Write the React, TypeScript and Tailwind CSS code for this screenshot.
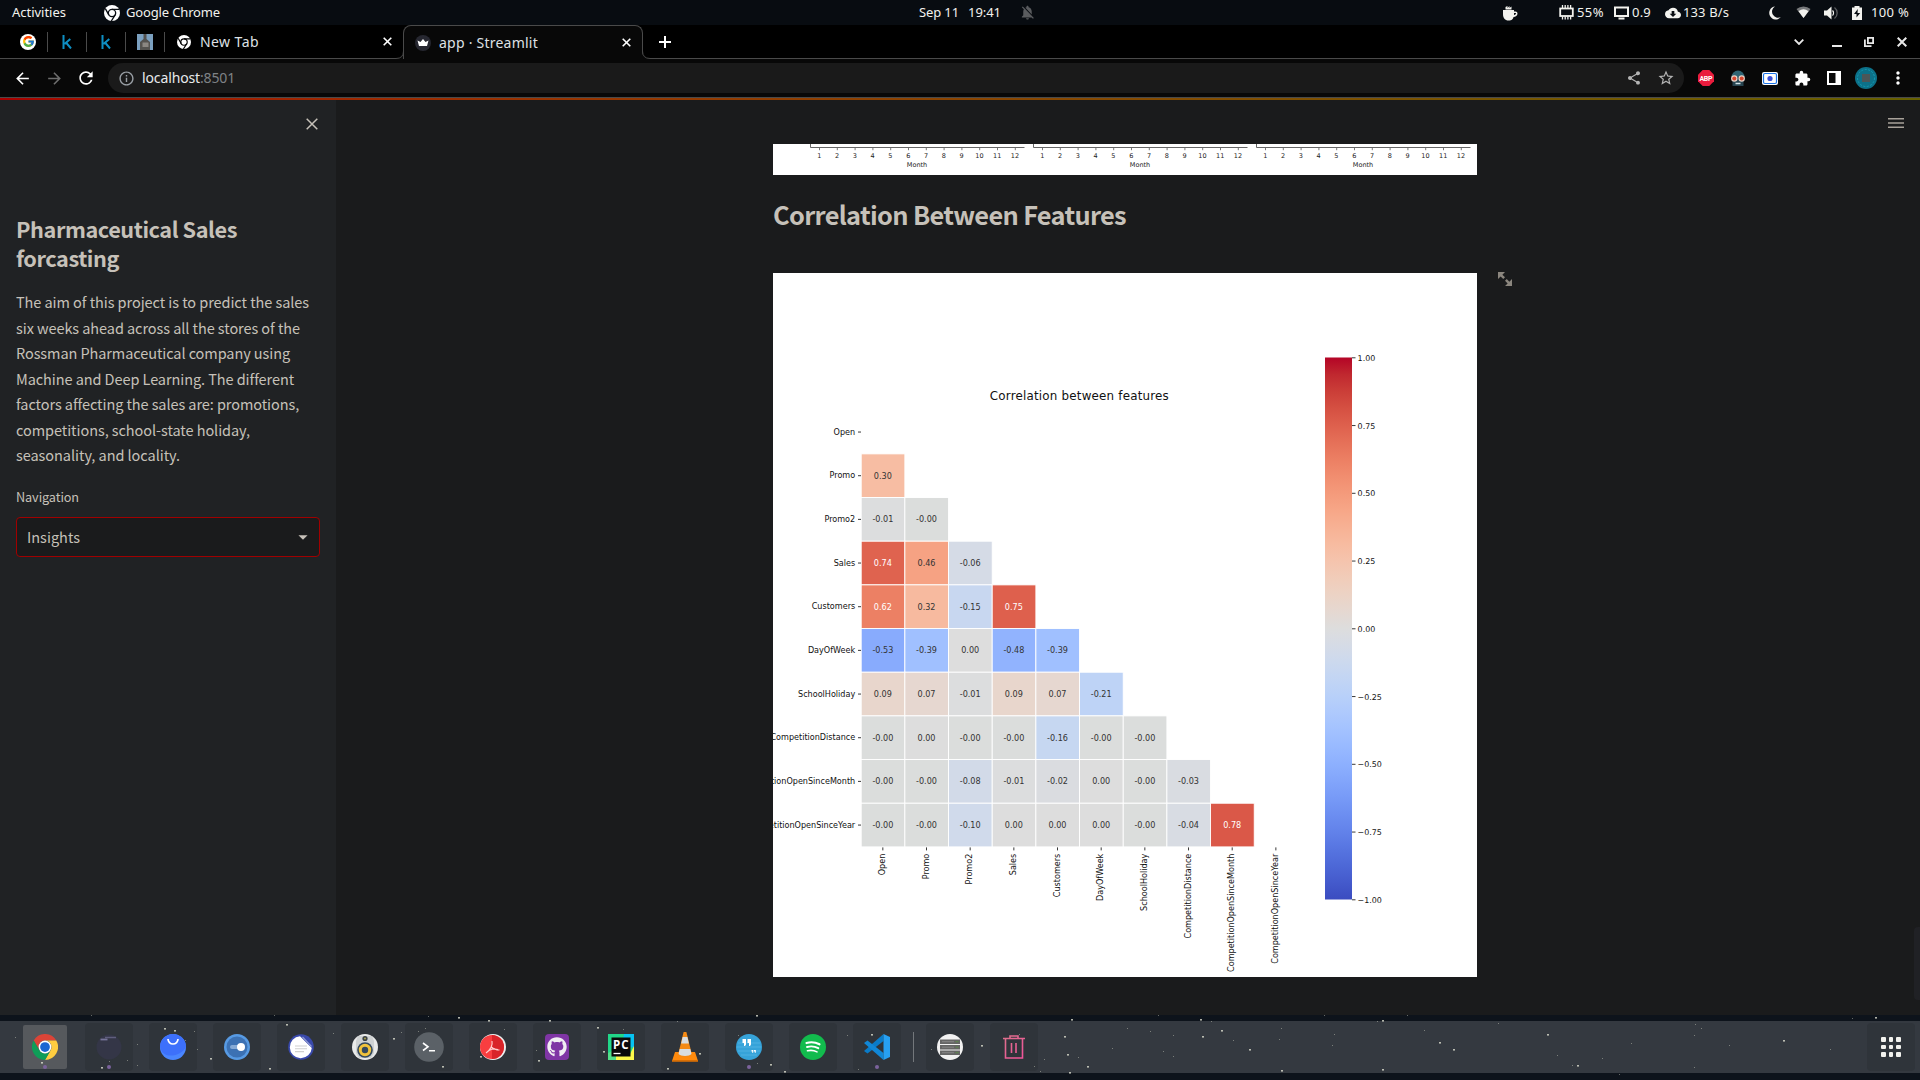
import React, { useLayoutEffect, useRef } from "react";
import {
  MdArrowBack,
  MdArrowForward,
  MdRefresh,
  MdInfoOutline,
  MdShare,
  MdStarBorder,
  MdExtension,
  MdNotificationsOff,
  MdCloudDownload,
  MdArrowDropDown,
  MdMoreVert,
} from "react-icons/md";
import { FcGoogle } from "react-icons/fc";
import { FaGithub, FaSpotify } from "react-icons/fa";

/* One line of text, spaced so that it fills the given width. */
function Line({ w, className = "", children }: { w: number; className?: string; children: string }) {
  const ref = useRef<HTMLSpanElement>(null);
  useLayoutEffect(() => {
    const el = ref.current;
    if (!el) return;
    el.style.letterSpacing = "0px";
    const natural = el.getBoundingClientRect().width;
    el.style.letterSpacing = `${(w - natural) / children.length}px`;
  }, [w, children]);
  return (
    <div className={"shrink-0 whitespace-pre " + className} style={{ width: w }}>
      <span ref={ref}>{children}</span>
    </div>
  );
}

function ChromeMono({ size, bg }: { size: number; bg: string }) {
  return (
    <svg width={size} height={size} viewBox="0 0 48 48">
      <circle cx="24" cy="24" r="24" fill="#fff" />
      <g stroke={bg} strokeWidth="4" fill="none">
        <path d="M24 13H46M14.5 29.5L4 11M33.5 29.5L22 48" />
        <circle cx="24" cy="24" r="11" />
      </g>
    </svg>
  );
}

function Cross({ size = 9, color = "#fff", width = 1.6 }: { size?: number; color?: string; width?: number }) {
  return (
    <svg width={size} height={size} viewBox={`0 0 ${size} ${size}`} stroke={color} strokeWidth={width}>
      <path d={`M.7 .7L${size - 0.7} ${size - 0.7}M${size - 0.7} .7L.7 ${size - 0.7}`} />
    </svg>
  );
}

function SystemBar() {
  return (
    <div className="flex h-[25px] items-center bg-[#080c11] text-[13px] text-[#f2f2ee]">
      <Line w={54} className="ml-3">Activities</Line>
      <div className="ml-[38px]"><ChromeMono size={16} bg="#080c11" /></div>
      <Line w={94} className="ml-[6px]">Google Chrome</Line>
      <Line w={40} className="ml-[699px]">Sep 11</Line>
      <Line w={33} className="ml-[9px]">19:41</Line>
      <MdNotificationsOff className="ml-[18px] text-[#5a5c5f]" size={17} />
      <svg className="ml-[466px] shrink-0" width="16" height="16" viewBox="0 0 16 16" fill="#f2f2ee">
        <path d="M1 5h11v1.500h1.500a2 2 0 0 1 2 2c0 2-2 3.500-4 3.500-.5 2-1.500 3.500-5 3.500S1 13 1 9z" />
        <path d="M3.500 4.500V2l2-1v2l2-2v2l2-1.500v3z" />
        <path d="M12 8h2c0 1-.8 2-2 2z" fill="#080c11" />
      </svg>
      <svg className="ml-[41px] shrink-0" width="15" height="15" viewBox="0 0 15 15" fill="none" stroke="#f2f2ee">
        <rect x="1.200" y="3.500" width="12.600" height="7.500" strokeWidth="1.800" />
        <path d="M3.500 0v3M6.200 0v3M8.900 0v3M11.600 0v3M3.500 11.500v3M6.200 11.500v3M8.900 11.500v3M11.600 11.500v3" strokeWidth="1.300" />
      </svg>
      <Line w={27} className="ml-[3px]">55%</Line>
      <svg className="ml-[10px] shrink-0" width="15" height="14" viewBox="0 0 15 14" fill="none" stroke="#f2f2ee" strokeWidth="2">
        <path d="M1 1.500h13v8.500H1zM4.500 12.500h6" />
      </svg>
      <Line w={19} className="ml-[3px]">0.9</Line>
      <MdCloudDownload className="ml-[14px] shrink-0" size={16} />
      <Line w={46} className="ml-[2px]">133 B/s</Line>
      <svg className="ml-[40px] shrink-0" width="12" height="14" viewBox="0 0 12 14" fill="#f2f2ee">
        <path d="M6 .5A6.500 6.500 0 1 0 11.800 11 6 6 0 0 1 6 .5z" />
      </svg>
      <svg className="ml-[15px] shrink-0" width="15" height="13" viewBox="0 0 15 13">
        <path d="M.5 3a11 11 0 0 1 14 0L7.500 12z" fill="#77797b" />
        <path d="M2.500 5.300a8 8 0 0 1 10 0L7.500 12z" fill="#f2f2ee" />
      </svg>
      <svg className="ml-[13px] shrink-0" width="14" height="14" viewBox="0 0 14 14">
        <path d="M0 4.500h3L7.500.5v13L3 9.500H0z" fill="#f2f2ee" />
        <path d="M8.500 4.500a3.500 3.500 0 0 1 0 5" stroke="#f2f2ee" strokeWidth="1.200" fill="none" />
        <path d="M10.500 1.500a7 7 0 0 1 0 11" stroke="#5a5c5f" strokeWidth="1.300" fill="none" />
      </svg>
      <svg className="ml-[14px] shrink-0" width="10" height="14" viewBox="0 0 10 14">
        <path d="M2.500 0h5v1.500H10V14H0V1.500h2.500z" fill="#f2f2ee" />
        <path d="M5.800 3L2 8h2.500v3.500L8.200 7H5.500z" fill="#080c11" />
      </svg>
      <Line w={38} className="ml-[9px]">100 %</Line>
    </div>
  );
}

function PinnedTab({ children }: { children: React.ReactNode }) {
  return (
    <div className="flex items-center">
      <div className="flex w-[38px] items-center justify-center">{children}</div>
      <div className="h-5 w-px bg-[#4a4a4a]" />
    </div>
  );
}

function KLetter() {
  return (
    <svg width="10" height="14" viewBox="0 0 10 14" stroke="#0e8fc4" strokeWidth="2" fill="none">
      <path d="M1.500 0v14M8.300 4L2.500 9M4 7.500L9 13.500" />
    </svg>
  );
}

function TabStrip() {
  return (
    <div className="flex h-[34px] bg-black text-[14px] text-[#dfe1e5]">
      <div className="flex w-[396px] items-center border-b border-[#4a4a4a] pl-[9px]">
        <PinnedTab>
          <div className="flex size-4 items-center justify-center rounded-full bg-white"><FcGoogle size={13} /></div>
        </PinnedTab>
        <PinnedTab><KLetter /></PinnedTab>
        <PinnedTab><KLetter /></PinnedTab>
        <PinnedTab>
          <svg width="16" height="16" viewBox="0 0 16 16">
            <rect width="16" height="16" fill="#7ba0c0" />
            <path d="M6.500 0h3v5l3.500 3v8H3V8l3.500-3z" fill="#54524f" />
            <path d="M5.500 8.500h6v4.500h-6z" fill="#8b8782" />
          </svg>
        </PinnedTab>
        <div className="ml-3 shrink-0"><ChromeMono size={14} bg="#000" /></div>
        <Line w={59} className="ml-[9px]">New Tab</Line>
        <div className="ml-[124px] shrink-0"><Cross /></div>
      </div>
      <svg width="8" height="34" viewBox="0 0 8 34">
        <path d="M0 33.500Q8 33.500 8 26V34H0z" fill="#080808" />
        <path d="M0 33.500Q7.500 33.500 7.500 26" stroke="#4a4a4a" fill="none" />
      </svg>
      <div className="-mx-px flex w-[240px] items-center rounded-t-lg border-x border-t border-[#4a4a4a] bg-[#080808]">
        <svg className="ml-[11px]" width="16" height="16" viewBox="0 0 16 16">
          <circle cx="8" cy="8" r="8" fill="#262730" />
          <path d="M2.500 5.500L5.500 7 8 4l2.500 3 3-1.500L12 11H4z" fill="#fff" />
        </svg>
        <Line w={99} className="ml-[8px]">app · Streamlit</Line>
        <div className="ml-[84px]"><Cross /></div>
      </div>
      <svg width="8" height="34" viewBox="0 0 8 34">
        <path d="M8 33.500Q0 33.500 0 26V34H8z" fill="#080808" />
        <path d="M8 33.500Q.5 33.500 .5 26" stroke="#4a4a4a" fill="none" />
      </svg>
      <div className="flex flex-1 items-center border-b border-[#4a4a4a]">
        <svg className="ml-[9px]" width="12" height="12" viewBox="0 0 12 12" stroke="#fff" strokeWidth="2">
          <path d="M6 0v12M0 6h12" />
        </svg>
        <svg className="ml-auto" width="10" height="6" viewBox="0 0 10 6" stroke="#e8e8e8" strokeWidth="1.800" fill="none">
          <path d="M.7 .7L5 5 9.300 .7" />
        </svg>
        <div className="mt-[8px] ml-[28px] h-[2px] w-[10px] bg-[#e8e8e8]" />
        <svg className="ml-[22px]" width="10" height="10" viewBox="0 0 10 10" stroke="#e8e8e8" strokeWidth="1.800" fill="none">
          <path d="M3.900 .9h5.200v5.200H3.900zM.9 2.500V9.100H7.500" />
        </svg>
        <div className="mr-[13px] ml-[23px]"><Cross size={10} color="#e8e8e8" width={2} /></div>
      </div>
    </div>
  );
}

function Slot({ children }: { children: React.ReactNode }) {
  return <div className="flex w-8 shrink-0 items-center justify-center">{children}</div>;
}

function Toolbar() {
  return (
    <div className="flex h-[38px] items-center bg-[#080808] pl-[6px] text-white">
      <Slot><MdArrowBack size={19} /></Slot>
      <Slot><MdArrowForward size={19} className="text-[#6d6d6d]" /></Slot>
      <Slot><MdRefresh size={20} /></Slot>
      <div className="ml-[6px] flex h-[30px] w-[1576px] items-center rounded-full bg-[#1a1a1a] pr-[2px] pl-[10px] text-[14px]">
        <MdInfoOutline size={17} className="text-[#9aa0a6]" />
        <Line w={58} className="mb-[2px] ml-[7px] text-[#e8eaed]">localhost</Line>
        <Line w={35} className="mb-[2px] text-[#7f8286]">:8501</Line>
        <div className="ml-auto flex">
          <Slot><MdShare size={16} className="text-[#b4b4b4]" /></Slot>
          <Slot><MdStarBorder size={18} className="text-[#b4b4b4]" /></Slot>
        </div>
      </div>
      <div className="ml-[6px] flex items-center">
        <Slot>
          <svg width="16" height="16" viewBox="0 0 16 16">
            <path d="M4.700 0h6.600L16 4.700v6.600L11.300 16H4.700L0 11.300V4.700z" fill="#ea1c3d" />
            <text x="8" y="10.600" textAnchor="middle" fontSize="7" fontWeight="700" fontFamily="Roboto, sans-serif" fill="#fff" textLength="13">ABP</text>
          </svg>
        </Slot>
        <Slot>
          <svg width="16" height="16" viewBox="0 0 16 16">
            <path d="M1.500 7a6.500 6.500 0 0 1 13 0z" fill="#2f6473" />
            <rect x="2.500" y="7" width="11" height="9" fill="#274450" />
            <circle cx="4.300" cy="8.500" r="3.200" fill="#e8d2c6" />
            <circle cx="11.700" cy="8.500" r="3.200" fill="#e8d2c6" />
            <circle cx="4.300" cy="8.500" r="2" fill="#d8472f" />
            <circle cx="11.700" cy="8.500" r="2" fill="#d8472f" />
            <path d="M5.500 13.500h5" stroke="#cfe0e4" strokeWidth="1.500" />
          </svg>
        </Slot>
        <Slot>
          <svg width="16" height="13" viewBox="0 0 16 13">
            <rect width="16" height="13" rx="2" fill="#fff" />
            <rect x="1.500" y="1.500" width="13" height="10" rx="1.500" fill="none" stroke="#1a73e8" strokeWidth="1.200" />
            <circle cx="8" cy="6.500" r="2.600" fill="#3b50d8" />
          </svg>
        </Slot>
        <Slot><MdExtension size={17} /></Slot>
        <Slot>
          <svg width="14" height="14" viewBox="0 0 14 14">
            <path fill="#fff" fillRule="evenodd" d="M0 0h14v14H0zM2 2v10h6.500V2z" />
          </svg>
        </Slot>
        <Slot>
          <svg width="22" height="22" viewBox="0 0 22 22">
            <circle cx="11" cy="11" r="11" fill="#0d7189" />
            <circle cx="11" cy="11" r="8.500" fill="none" stroke="#119ab4" strokeWidth="1" strokeDasharray="2 1.500" />
            <rect x="7" y="7" width="8" height="8" fill="#4c5658" />
          </svg>
        </Slot>
        <Slot><MdMoreVert size={20} /></Slot>
      </div>
    </div>
  );
}

const INTRO: [string, number][] = [
  ["The aim of this project is to predict the sales", 293],
  ["six weeks ahead across all the stores of the", 284],
  ["Rossman Pharmaceutical company using", 274],
  ["Machine and Deep Learning. The different", 278],
  ["factors affecting the sales are: promotions,", 283],
  ["competitions, school-state holiday,", 234],
  ["seasonality, and locality.", 164],
];

function Sidebar() {
  return (
    <aside className="w-[336px] shrink-0 bg-[#202224] px-4 text-[#c6c1b9]">
      <div className="flex h-[48px] items-center justify-end pr-[2px]">
        <Cross size={12} color="#c6c1b9" width={1.5} />
      </div>
      <h1 className="mt-[66px] text-[21.700px] leading-[29px] font-bold">
        <Line w={221}>Pharmaceutical Sales</Line>
        <Line w={103}>forcasting</Line>
      </h1>
      <div className="mt-[17px] text-[14.500px] leading-[25.500px]">
        {INTRO.map(([text, w]) => (
          <Line key={text} w={w}>{text}</Line>
        ))}
      </div>
      <div className="mt-[19.700px] text-[12.700px] leading-[20px]">
        <Line w={63}>Navigation</Line>
      </div>
      <div className="mt-[10px] flex h-10 w-[304px] items-center justify-between rounded-[4px] border border-[#a00000] bg-[#1a1b1c] pr-[5px] pl-[10px] text-[14.500px]">
        <Line w={53}>Insights</Line>
        <MdArrowDropDown size={22} />
      </div>
    </aside>
  );
}

const MONTHS = [1, 2, 3, 4, 5, 6, 7, 8, 9, 10, 11, 12];

function MonthAxes() {
  return (
    <svg className="block bg-white" width="704" height="31" fontFamily="DejaVu Sans, sans-serif" fontSize="6.500">
      {[37.5, 260.5, 483.5].map((x0) => (
        <g key={x0}>
          <path d={`M${x0} 0V3.500H${x0 + 214}`} stroke="#555" strokeWidth="0.900" fill="none" />
          {MONTHS.map((m, i) => (
            <g key={m}>
              <path d={`M${x0 + 9 + i * 17.8} 4v2.200`} stroke="#555" strokeWidth="0.800" />
              <text x={x0 + 8.7 + i * 17.8} y="13.500" textAnchor="middle" fill="#222">{m}</text>
            </g>
          ))}
          <text x={x0 + 106.5} y="22.600" textAnchor="middle" fill="#222">Month</text>
        </g>
      ))}
    </svg>
  );
}

const COOLWARM = [
  [59, 76, 192], [68, 90, 204], [77, 104, 215], [87, 117, 225], [98, 130, 234], [108, 142, 241],
  [119, 154, 247], [130, 165, 251], [141, 176, 254], [152, 185, 255], [163, 194, 255], [174, 201, 253],
  [184, 208, 249], [194, 213, 244], [204, 217, 238], [213, 219, 230], [221, 221, 221], [229, 216, 209],
  [236, 211, 197], [241, 204, 185], [245, 196, 173], [247, 187, 160], [247, 177, 148], [247, 166, 135],
  [244, 154, 123], [241, 141, 111], [236, 127, 99], [229, 112, 88], [222, 96, 77], [213, 80, 66],
  [203, 62, 56], [192, 40, 47], [180, 4, 38],
];

function coolwarm(v: number) {
  const t = ((v + 1) / 2) * 32;
  const i = Math.min(31, Math.floor(t));
  const f = t - i;
  const c = COOLWARM[i].map((a, k) => Math.round(a + (COOLWARM[i + 1][k] - a) * f));
  return `rgb(${c.join(",")})`;
}

const FEATURES = [
  "Open", "Promo", "Promo2", "Sales", "Customers", "DayOfWeek", "SchoolHoliday",
  "CompetitionDistance", "CompetitionOpenSinceMonth", "CompetitionOpenSinceYear",
];

const VALUES = [
  [],
  ["0.30"],
  ["-0.01", "-0.00"],
  ["0.74", "0.46", "-0.06"],
  ["0.62", "0.32", "-0.15", "0.75"],
  ["-0.53", "-0.39", "0.00", "-0.48", "-0.39"],
  ["0.09", "0.07", "-0.01", "0.09", "0.07", "-0.21"],
  ["-0.00", "0.00", "-0.00", "-0.00", "-0.16", "-0.00", "-0.00"],
  ["-0.00", "-0.00", "-0.08", "-0.01", "-0.02", "0.00", "-0.00", "-0.03"],
  ["-0.00", "-0.00", "-0.10", "0.00", "0.00", "0.00", "-0.00", "-0.04", "0.78"],
];

const X0 = 88.2;
const Y0 = 137.2;
const STEP = 43.67;

function Heatmap() {
  return (
    <svg className="block bg-white" width="704" height="704" fontFamily="DejaVu Sans, sans-serif" fontSize="8.080" fill="#111">
      <defs>
        <linearGradient id="bar" x1="0" y1="1" x2="0" y2="0">
          {COOLWARM.map((c, i) => (
            <stop key={i} offset={i / 32} stopColor={`rgb(${c.join(",")})`} />
          ))}
        </linearGradient>
      </defs>
      <text x="306.300" y="127.400" textAnchor="middle" fontSize="11.900" textLength="179">Correlation between features</text>
      {VALUES.map((row, r) =>
        row.map((v, c) => {
          const light = ["0.74", "0.62", "0.75", "0.78"].includes(v);
          return (
            <g key={`${r}-${c}`}>
              <rect x={X0 + c * STEP} y={Y0 + r * STEP} width={STEP} height={STEP} fill={v === "-0.00" ? "#dbdddc" : coolwarm(Number(v))} stroke="#fff" strokeWidth="0.900" />
              <text x={X0 + (c + 0.5) * STEP - 0.2} y={Y0 + (r + 0.5) * STEP + 2.8} textAnchor="middle" fill={light ? "#fff" : "#333"}>{v}</text>
            </g>
          );
        }),
      )}
      {FEATURES.map((name, i) => (
        <g key={name}>
          <path d={`M${X0 - 3.2} ${Y0 + (i + 0.5) * STEP}h3`} stroke="#222" strokeWidth="0.900" />
          <text x={X0 - 6} y={Y0 + (i + 0.5) * STEP + 2.5} textAnchor="end">{name}</text>
          <path d={`M${X0 + (i + 0.5) * STEP - 0.2} ${Y0 + 10 * STEP + 0.5}v3`} stroke="#222" strokeWidth="0.900" />
          <text transform={`translate(${X0 + (i + 0.5) * STEP + 1.9} ${Y0 + 10 * STEP + 6.8}) rotate(-90)`} textAnchor="end">{name}</text>
        </g>
      ))}
      <rect x="552" y="84.500" width="27" height="542" fill="url(#bar)" />
      {["1.00", "0.75", "0.50", "0.25", "0.00", "−0.25", "−0.50", "−0.75", "−1.00"].map((t, i) => (
        <g key={t}>
          <path d={`M579 ${84.8 + i * 67.75}h3.500`} stroke="#222" strokeWidth="0.900" />
          <text x="584.600" y={87.9 + i * 67.75} fontSize="7.950">{t}</text>
        </g>
      ))}
    </svg>
  );
}

function Content() {
  return (
    <main className="flex flex-1 bg-[#1a1b1c] text-[#c6c1b9]">
      <div className="ml-[437px] w-[704px] pt-[44px]">
        <MonthAxes />
        <h2 className="mt-[19px] text-[25.400px] leading-[40px] font-bold">
          <Line w={353}>Correlation Between Features</Line>
        </h2>
        <div className="mt-[39px]"><Heatmap /></div>
      </div>
      <svg className="mt-[172px] ml-[21px]" width="14" height="14" viewBox="0 0 8 8" fill="#8b867e">
        <path d="M0 0v4l1.500-1.500 1.500 1.500 1-1-1.500-1.500 1.500-1.500h-4zm5 4l-1 1 1.500 1.500-1.500 1.500h4v-4l-1.500 1.500-1.500-1.500z" />
      </svg>
      <div className="ml-auto flex flex-col items-end">
        <svg className="mt-[18px] mr-4" width="16" height="11" viewBox="0 0 16 11" stroke="#a8a299" strokeWidth="1.400">
          <path d="M0 .7h16M0 5h16M0 9.300h16" />
        </svg>
        <div className="mt-auto mb-[15px] h-[73px] w-[6px] rounded-l bg-[#202125]" />
      </div>
    </main>
  );
}

function DockItem({ children, active, running }: { children: React.ReactNode; active?: boolean; running?: boolean }) {
  return (
    <div className="flex w-16 shrink-0 justify-center">
      <div className={"relative flex items-center justify-center " + (active ? "size-11 rounded-[2px] bg-[#56595d]" : "size-12 rounded bg-[#2f343a]")}>
        {children}
        {running && <div className={"absolute left-1/2 size-1 -translate-x-1/2 rounded-full bg-[#7b639c] " + (active ? "bottom-0" : "bottom-[2px]")} />}
      </div>
    </div>
  );
}

const STARS: [number, number, number][] = [
  [91, 0, 1], [274, 0, 1], [428, 1, 1], [458, 2, 2], [488, 5, 2], [15, 22, 1], [164, 13, 2], [174, 15, 2], [194, 16, 1],
  [185, 25, 1], [137, 29, 1], [197, 34, 1], [210, 43, 2], [127, 45, 1], [137, 50, 1], [101, 52, 2], [109, 46, 1], [41, 47, 2],
  [286, 9, 2], [333, 18, 1], [269, 53, 2], [393, 23, 2], [401, 17, 1], [418, 16, 1], [425, 13, 1], [442, 51, 2], [480, 41, 2],
  [549, 5, 2], [504, 14, 1], [597, 12, 2], [623, 14, 1], [536, 35, 1], [538, 45, 2], [603, 36, 2], [677, 6, 1], [667, 53, 2],
  [699, 38, 2], [756, 0, 2], [738, 20, 1], [757, 48, 1], [770, 49, 2], [784, 56, 2], [847, 20, 1], [871, 19, 2], [858, 54, 1],
  [931, 34, 1], [981, 30, 2], [1019, 19, 1], [1034, 51, 1], [1040, 56, 1], [1044, 44, 1], [1064, 21, 2], [1067, 39, 2],
  [1069, 57, 2], [1071, 4, 2], [1078, 42, 1], [1087, 51, 2], [1112, 33, 1], [1127, 13, 1], [1150, 16, 1], [1158, 0, 1],
  [1163, 36, 1], [1173, 20, 1], [1173, 41, 1], [1200, 4, 2], [1202, 21, 2], [1211, 6, 1], [1221, 15, 2], [1233, 25, 1],
  [1249, 34, 2], [1279, 24, 1], [1281, 13, 1], [1281, 55, 2], [1324, 0, 1], [1334, 19, 1], [1332, 30, 1], [1377, 6, 1],
  [1382, 5, 2], [1382, 54, 2], [1407, 0, 1], [1424, 15, 1], [1439, 27, 2], [1453, 34, 2], [1498, 8, 1], [1547, 19, 2],
  [1557, 40, 1], [1572, 50, 1], [1577, 50, 2], [1602, 43, 1], [1631, 28, 1], [1619, 59, 1], [1695, 9, 1], [1701, 13, 1],
  [1694, 20, 1], [1729, 30, 1], [1694, 52, 1], [1783, 25, 2], [1830, 34, 1], [1852, 3, 1], [1875, 2, 2],
];

function Dock() {
  return (
    <div className="relative h-[65px] bg-[#0d131b] pt-[6px]">
      <div className="flex h-[52px] items-center bg-[#343940] pl-[13px]">
        <DockItem active running>
          <svg width="26" height="26" viewBox="0 0 48 48">
            <path d="M24 12h20.800A24 24 0 0 0 3.200 12L13.600 30A12 12 0 0 1 24 12z" fill="#db4437" />
            <path d="M44.800 12A24 24 0 0 1 24 48L34.400 30A12 12 0 0 0 24 12z" fill="#ffcd40" />
            <path d="M24 48A24 24 0 0 1 3.200 12L13.600 30A12 12 0 0 0 34.400 30z" fill="#0f9d58" />
            <circle cx="24" cy="24" r="11.800" fill="#fff" />
            <circle cx="24" cy="24" r="9" fill="#1b66d2" />
          </svg>
        </DockItem>
        <DockItem running>
          <svg width="26" height="26" viewBox="0 0 26 26">
            <circle cx="13" cy="13" r="12.500" fill="#343647" />
            <path d="M9 3.500h11" stroke="#5f5e7d" strokeWidth="1.500" />
            <path d="M4.500 5.500h7" stroke="#77759a" strokeWidth="1.800" />
          </svg>
        </DockItem>
        <DockItem>
          <svg width="26" height="26" viewBox="0 0 26 26">
            <circle cx="13" cy="13" r="13" fill="#4a86ff" />
            <path d="M0 13a13 13 0 0 1 26 0c-4 8-18 12-24 5z" fill="#3d70fb" />
            <path d="M8 5a5 5 0 0 0 10 0" stroke="#fff" strokeWidth="1.700" fill="none" />
          </svg>
        </DockItem>
        <DockItem>
          <svg width="26" height="26" viewBox="0 0 26 26">
            <circle cx="13" cy="13" r="13" fill="#579ae3" />
            <circle cx="13" cy="13" r="10.500" fill="#3c71b3" />
            <rect x="6" y="11" width="12" height="4" rx="2" fill="#86aad6" />
            <circle cx="17" cy="13" r="4" fill="#fff" />
          </svg>
        </DockItem>
        <DockItem>
          <svg width="26" height="26" viewBox="0 0 26 26">
            <circle cx="13" cy="13" r="12.800" fill="#3949ab" />
            <path d="M12 2.200A11 11 0 1 0 23.800 14z" fill="#fff" />
            <path d="M14.500 3L23.500 12.500" stroke="#8f9ad4" strokeWidth="1.200" />
            <path d="M7 12h12M7 14.800h12M7 17.600h9" stroke="#d0d0d0" strokeWidth="1.100" />
          </svg>
        </DockItem>
        <DockItem>
          <svg width="26" height="26" viewBox="0 0 26 26">
            <circle cx="13" cy="13" r="13" fill="#e9eaea" />
            <path d="M6 2h14l2 5v12l-3 5H7l-3-5V7z" fill="#cfd2d3" />
            <circle cx="13" cy="4.500" r="2.600" fill="#3c4245" />
            <circle cx="13" cy="4.500" r="1.100" fill="#9e9a50" />
            <circle cx="13" cy="16" r="7.800" fill="#34495e" />
            <circle cx="13" cy="16" r="4.700" fill="none" stroke="#f0c23c" strokeWidth="3" />
          </svg>
        </DockItem>
        <DockItem>
          <svg width="30" height="30" viewBox="0 0 30 30" fill="none" stroke="#fff" strokeWidth="1.600">
            <circle cx="15" cy="15" r="14.800" fill="#5b6167" stroke="none" />
            <path d="M9 11l5 3.800L9 18.500M15 18.700h6" />
          </svg>
        </DockItem>
        <DockItem>
          <svg width="26" height="26" viewBox="0 0 26 26">
            <circle cx="13" cy="13" r="13" fill="#eee" />
            <circle cx="12" cy="13" r="12" fill="#f93e40" />
            <path d="M12 1a12 12 0 0 1 0 24z" fill="#d92429" />
            <path d="M12 7c1 5-2 9-6 12M11.500 13c3 3 6 3 8 3M9 16.500c3-1.500 6-1.800 9-1" stroke="#ffd0d0" strokeWidth="1.100" fill="none" />
          </svg>
        </DockItem>
        <DockItem>
          <div className="flex h-[26px] w-6 items-center justify-center rounded-[4px] bg-[#7f35a5]">
            <FaGithub size={20} className="text-[#f1eef3]" />
          </div>
        </DockItem>
        <DockItem>
          <svg width="26" height="26" viewBox="0 0 26 26">
            <rect width="26" height="26" fill="#21d789" />
            <path d="M16 0h10v14L14 10z" fill="#07c3f2" />
            <path d="M0 26L4 20h18l4-8v14z" fill="#fcf84a" />
            <path d="M0 19l8-4v11H0z" fill="#52e089" />
            <rect x="3.500" y="3.500" width="19" height="19" fill="#0a0a0a" />
            <text x="5" y="14.500" fontSize="11.500" fontWeight="700" fontFamily="Open Sans, sans-serif" fill="#fff" textLength="15.500">PC</text>
            <path d="M5.500 19.500h7" stroke="#fff" strokeWidth="1.300" />
          </svg>
        </DockItem>
        <DockItem>
          <svg width="26" height="30" viewBox="0 0 26 30">
            <path d="M3 20h20l3 9H0z" fill="#ff8a0c" />
            <path d="M11.600 0h2.800L20 23c-2 3-12 3-14 0z" fill="#f58a14" />
            <path d="M10.600 5h4.800l1.500 6.500h-7.800zM7.700 17h10.600l1.200 5c-2 2.500-11 2.500-13 0z" fill="#d9dde0" />
            <path d="M0 28h26v1.800H0z" fill="#d86f05" />
          </svg>
        </DockItem>
        <DockItem running>
          <svg width="26" height="26" viewBox="0 0 26 26">
            <circle cx="13" cy="13" r="13" fill="#36a3d9" />
            <path d="M2 9h22M1 13h24M2 17h22M5 21h16" stroke="#55b5e4" strokeWidth="0.800" />
            <path d="M6.500 5h3.500v5c0 1.500-.8 2-2 2V9H6.500zM11.500 5H15v5c0 1.500-.8 2-2 2V9h-1.500zM15.500 16h1.800v2c0 .8-.4 1-1 1v-1.500h-.8zM18 16h1.800v2c0 .8-.4 1-1 1v-1.500H18z" fill="#fff" />
          </svg>
        </DockItem>
        <DockItem>
          <svg width="26" height="26" viewBox="0 0 26 26">
            <circle cx="13" cy="13" r="13" fill="#12bb4d" />
            <g stroke="#fff" fill="none" strokeLinecap="round">
              <path d="M6.500 9c4-1.200 9-.8 13 1.300" strokeWidth="2.200" />
              <path d="M7 13c3.500-1 8-.6 11.300 1.200" strokeWidth="1.900" />
              <path d="M7.500 16.800c3-.8 6.500-.5 9.500 1.100" strokeWidth="1.600" />
            </g>
          </svg>
        </DockItem>
        <DockItem running>
          <svg width="26" height="26" viewBox="0 0 26 26">
            <path d="M19.500 0v7L3.500 19.500 0 17z" fill="#0a7bc8" />
            <path d="M19.500 26v-7L3.500 6.500 0 9z" fill="#1187d6" />
            <path d="M19.500 0L26 3v20l-6.500 3z" fill="#27a0f2" />
          </svg>
        </DockItem>
        <div className="mr-1 ml-1 h-[30px] w-px bg-[#73777b]" />
        <DockItem>
          <svg width="26" height="26" viewBox="0 0 26 26">
            <circle cx="13" cy="13" r="13" fill="#f2f2f2" />
            <path d="M3 5.500h20v4.500H3zM3 11h20v4.500H3zM3 16.500h20v4.500H3z" fill="#666" />
            <path d="M5 7.700h12M5 13.200h12M5 18.700h12" stroke="#858585" />
            <path d="M18.500 7.700h3M18.500 13.200h3M18.500 18.700h3" stroke="#5c8a4a" />
          </svg>
        </DockItem>
        <DockItem>
          <svg width="24" height="26" viewBox="0 0 24 26" fill="none" stroke="url(#bin)" strokeWidth="1.600">
            <defs>
              <linearGradient id="bin" gradientUnits="userSpaceOnUse" x1="0" y1="0" x2="24" y2="26">
                <stop offset="0" stopColor="#d9738a" />
                <stop offset="1" stopColor="#f4509c" />
              </linearGradient>
            </defs>
            <path d="M1 4.500h22M8 4V2h8v2M3.500 5v19h17V5M9.500 9v10M14 9v10" />
          </svg>
        </DockItem>
        <div className="mr-[5px] ml-auto flex size-12 items-center justify-center rounded bg-[#2f343a]">
          <div className="grid grid-cols-3 gap-[3px]">
            {MONTHS.slice(0, 9).map((n) => (
              <div key={n} className="size-[4.500px] rounded-[1px] bg-[#f2f2ee]" />
            ))}
          </div>
        </div>
      </div>
      <svg className="pointer-events-none absolute inset-0" width="1920" height="65">
        {STARS.map(([x, y, s]) => (
          <rect key={`${x}-${y}`} x={x} y={y} width={s} height={s === 2 ? 1.6 : 1} fill="#e8ead8" opacity={s === 2 ? 0.75 : 0.4} />
        ))}
      </svg>
    </div>
  );
}

export default function App() {
  return (
    <div className="flex h-[1080px] w-[1920px] flex-col overflow-hidden">
      <div className="font-['Noto_Sans',sans-serif]">
        <SystemBar />
        <TabStrip />
        <Toolbar />
        <div className="h-px bg-[#4a4a4a]" />
        <div className="h-[2px] bg-gradient-to-r from-[#a80000] to-[#666000]" />
      </div>
      <div className="flex min-h-0 flex-1 font-['Noto_Sans_CJK_SC',sans-serif]">
        <Sidebar />
        <Content />
      </div>
      <Dock />
    </div>
  );
}
